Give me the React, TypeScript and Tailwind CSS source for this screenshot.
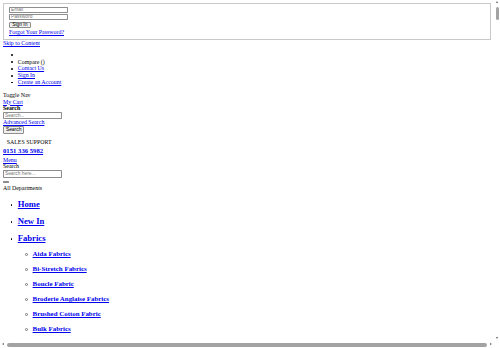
const topLinks = [
  { label: "", link: false },
  { label: "Compare ()", link: false },
  { label: "Contact Us", link: true },
  { label: "Sign In", link: true },
  { label: "Create an Account", link: true },
];

const departments = ["Home", "New In"];

const fabrics = [
  "Aida Fabrics",
  "Bi-Stretch Fabrics",
  "Boucle Fabric",
  "Broderie Anglaise Fabrics",
  "Brushed Cotton Fabric",
  "Bulk Fabrics",
];

function Field({ placeholder, width = "w-[58.5px]", height = "h-[6.6px]" }: { placeholder: string; width?: string; height?: string }) {
  return (
    <input
      placeholder={placeholder}
      className={`block ${height} ${width} rounded-[0.7px] border border-[#8d8d8d] bg-white px-[0.9px] font-['Liberation_Sans',sans-serif] text-[4.9px] leading-none placeholder:text-[#757575]`}
    />
  );
}

function Btn({ label, className }: { label: string; className: string }) {
  return (
    <button
      type="button"
      className={`block rounded-[1px] border border-[#8d8d8d] bg-[#efefef] font-['Liberation_Sans',sans-serif] text-[4.9px] leading-none text-black ${className}`}
    >
      {label}
    </button>
  );
}

// list markers, drawn so they sit where the browser puts them at this size
function Dot({ className }: { className: string }) {
  return <span className={`absolute h-[1.7px] w-[1.7px] rounded-full bg-black ${className}`} />;
}

export default function App() {
  return (
    <div className="relative h-[348px] w-[500px] overflow-hidden bg-white font-['Liberation_Serif',serif] text-[5.9px] leading-[6.8px] text-black">
      <div className="w-[493.5px] px-[3px] pt-[3px]">
        {/* login block */}
        <form className="border border-[#c8c8c8] px-[5px] pb-[3.3px] pt-[2.7px]">
          <Field placeholder="Email" />
          <div className="mt-[0.4px]">
            <Field placeholder="Password" />
          </div>
          <Btn label="Sign In" className="mt-[1.4px] h-[6.7px] w-[21.5px]" />
          <div className="mt-[0.6px]">
            <a className="text-[#0000ee] underline">Forgot Your Password?</a>
          </div>
        </form>

        <div>
          <a className="text-[#0000ee] underline">Skip to Content</a>
        </div>

        <ul className="mb-[5.9px] mt-[5px] pl-[14.8px]">
          {topLinks.map((item, i) => (
            <li key={i} className="relative h-[6.8px]">
              <Dot className="left-[-6.4px] top-[2.6px]" />
              {item.link ? <a className="text-[#0000ee] underline">{item.label}</a> : item.label}
            </li>
          ))}
        </ul>

        <div>Toggle Nav</div>
        <div>
          <a className="text-[#0000ee] underline">My Cart</a>
        </div>
        <div className="font-bold">Search</div>
        <Field placeholder="Search..." height="h-[7.4px]" width="w-[58.7px]" />
        <div>
          <a className="text-[#0000ee] underline">Advanced Search</a>
        </div>
        <Btn label="Search" className="mt-[0.1px] h-[7.6px] w-[21.3px]" />

        <div className="mt-[4.6px] pl-[3.7px]">SALES SUPPORT</div>
        <div className="pt-[1px] text-[6.7px] font-bold leading-[10.3px]">
          <a className="text-[#0000ee] underline">0151 336 5982</a>
        </div>
        <div>
          <a className="text-[#0000ee] underline">Menu</a>
        </div>
        <div>Search</div>
        <Field placeholder="Search here..." height="h-[7.4px]" width="w-[58.7px]" />
        <div className="h-[6.9px] pt-[3.4px]">
          <button type="button" className="block h-[2.4px] w-[6px] rounded-[0.5px] border border-[#8d8d8d] bg-[#efefef]" />
        </div>
        <div>All Departments</div>

        <ul className="pl-[14.8px]">
          {departments.map((d) => (
            <li key={d} className="relative mt-[7.2px]">
              <Dot className="left-[-7px] top-[5.3px]" />
              <h2 className="text-[8.6px] font-bold leading-[10px]">
                <a className="text-[#0000ee] underline">{d}</a>
              </h2>
            </li>
          ))}
          <li className="relative mt-[7.2px]">
            <Dot className="left-[-7px] top-[5.3px]" />
            <h2 className="text-[8.6px] font-bold leading-[10px]">
              <a className="text-[#0000ee] underline">Fabrics</a>
            </h2>
            <ul className="mt-[7.2px] pl-[14.8px]">
              {fabrics.map((f, i) => (
                <li key={f} className={`relative ${i === 0 ? "" : "mt-[7.15px]"}`}>
                  <span className="absolute left-[-7.2px] top-[3.1px] h-[2.5px] w-[2.5px] rounded-full border-[0.5px] border-[#777]" />
                  <h3 className="text-[6.9px] font-bold leading-[7.9px]">
                    <a className="text-[#0000ee] underline">{f}</a>
                  </h3>
                </li>
              ))}
            </ul>
          </li>
        </ul>
      </div>

      {/* vertical scrollbar */}
      <div className="absolute right-0 top-0 h-[341px] w-[6.5px] bg-white">
        <div className="absolute left-[2px] top-[0.6px] h-0 w-0 border-x-[1.5px] border-b-[2px] border-x-transparent border-b-[#606060]" />
        <div className="absolute left-[2.2px] top-[7.3px] h-[12.7px] w-[3.6px] rounded-full bg-[#a3a3a3]" />
        <div className="absolute bottom-[1.6px] left-[2px] h-0 w-0 border-x-[1.5px] border-t-[2px] border-x-transparent border-t-[#606060]" />
      </div>

      {/* horizontal scrollbar */}
      <div className="absolute bottom-0 left-0 h-[7px] w-[493.5px] bg-white">
        <div className="absolute left-[1.7px] top-[2.2px] h-0 w-0 border-y-[1.5px] border-r-[2px] border-y-transparent border-r-[#606060]" />
        <div className="absolute left-[6.7px] top-[2.3px] h-[3.4px] w-[480.6px] rounded-full bg-[#a3a3a3]" />
        <div className="absolute left-[489.7px] top-[2.2px] h-0 w-0 border-y-[1.5px] border-l-[2px] border-y-transparent border-l-[#606060]" />
      </div>
      <div className="absolute bottom-0 right-0 h-[7px] w-[6.5px] bg-white" />
    </div>
  );
}
